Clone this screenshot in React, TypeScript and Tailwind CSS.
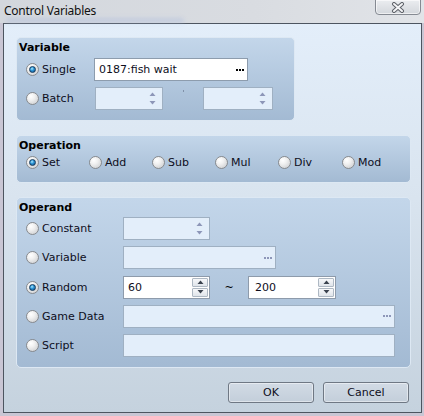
import React from "react";

function Radio({ checked }: { checked?: boolean }) {
  return (
    <span className="flex h-[13px] w-[13px] shrink-0 items-center justify-center rounded-full border border-[#878a8e] bg-[radial-gradient(circle_at_35%_30%,#ffffff_0%,#f1f1f1_35%,#c6c8cb_100%)]">
      {checked && (
        <span className="h-[7px] w-[7px] rounded-full border border-[#133a5e] bg-[radial-gradient(circle_at_40%_35%,#b0eaff_0%,#2f98d8_40%,#0c4680_100%)]" />
      )}
    </span>
  );
}

function Opt({ label, checked, cls }: { label: string; checked?: boolean; cls: string }) {
  return (
    <div className={`flex items-center gap-[3px] ${cls}`}>
      <Radio checked={checked} />
      <span className="text-[11px] leading-[13px] text-[#0e0e1c]">{label}</span>
    </div>
  );
}

function Tri({ up, color }: { up?: boolean; color: string }) {
  return (
    <svg width="7" height="4" viewBox="0 0 7 4">
      {up ? <polygon points="0.5,4 3.5,0.5 6.5,4" fill={color} /> : <polygon points="0.5,0 3.5,3.5 6.5,0" fill={color} />}
    </svg>
  );
}

function DisabledSpin({ cls }: { cls: string }) {
  return (
    <div className={`flex h-[23px] items-center justify-end border border-[#9fb0c2] bg-[#e3eefa] pr-[6px] ${cls}`}>
      <div className="flex flex-col gap-[5px]">
        <Tri up color="#8d96b8" />
        <Tri color="#8d96b8" />
      </div>
    </div>
  );
}

function SpinBtn({ up }: { up?: boolean }) {
  return (
    <div className="flex h-[9px] w-[16px] items-center justify-center rounded-[1px] border border-[#aeb8c3] bg-[linear-gradient(#f7f8fa,#dfe4ea)]">
      <Tri up={up} color="#3a424e" />
    </div>
  );
}

function EnabledSpin({ value, cls, pl }: { value: string; cls: string; pl: string }) {
  return (
    <div className={`flex h-[23px] items-center border border-[#8e9bab] bg-white pr-[1px] ${pl} ${cls}`}>
      <span className="flex-1 text-[11px] leading-[13px] text-[#0e0e1c]">{value}</span>
      <div className="flex flex-col gap-[1px]">
        <SpinBtn up />
        <SpinBtn />
      </div>
    </div>
  );
}

function Dots({ color }: { color: string }) {
  return (
    <div className="flex gap-[1px]">
      <span className={`h-[2px] w-[2px] ${color}`} />
      <span className={`h-[2px] w-[2px] ${color}`} />
      <span className={`h-[2px] w-[2px] ${color}`} />
    </div>
  );
}

function Group({ title, cls, children }: { title: string; cls: string; children: React.ReactNode }) {
  return (
    <div
      className={`flex flex-col rounded-[5px] border border-[#dde8f3] bg-[linear-gradient(#c3d6ea,#a3bad3)] pl-[9px] pt-[3px] ${cls}`}
    >
      <div className="-ml-[7px] h-[13px] text-[11px] font-bold leading-[13px] text-black">{title}</div>
      {children}
    </div>
  );
}

function Button({ label }: { label: string }) {
  return (
    <div className="flex h-[21px] w-[86px] items-center justify-center rounded-[3px] border border-[#6f7884] bg-[linear-gradient(#d2dbe5,#c3ceda)] text-[11px] leading-[13px] text-[#0e0e1c] shadow-[inset_0_0_0_1px_rgba(255,255,255,0.45)]">
      {label}
    </div>
  );
}

export default function App() {
  return (
    <div className="relative flex h-[416px] w-[424px] flex-col overflow-hidden bg-[#c9c6d4] font-['DejaVu_Sans',sans-serif]">
      {/* title bar */}
      <div className="relative flex h-[23px] shrink-0 items-start bg-[linear-gradient(90deg,#d3d7dd,#d9dce1_60%,#e1e4e8)]">
        <div className="absolute left-[6px] top-[18px] h-[5px] w-[178px] rounded-full bg-[#a8b8dc] opacity-40 blur-[2px]" />
        <span className="relative ml-[4px] mt-[3px] font-['Noto_Sans',sans-serif] text-[12px] leading-[16px] tracking-[-0.25px] text-[#111]">
          Control Variables
        </span>
        <div className="absolute right-[3px] top-[-1px] flex h-[16px] w-[46px] items-center justify-center rounded-b-[4px] border border-[#858a92] bg-[linear-gradient(#ebedf0,#d3d7dc)] shadow-[inset_0_0_0_1px_rgba(255,255,255,0.6)]">
          <svg width="14" height="11" viewBox="0 0 14 11">
            <path d="M3 2 L11 9 M11 2 L3 9" stroke="#5d6168" strokeWidth="4" strokeLinecap="round" />
            <path d="M3 2 L11 9 M11 2 L3 9" stroke="#f4f5f7" strokeWidth="2" strokeLinecap="round" />
          </svg>
        </div>
      </div>

      {/* client area */}
      <div className="ml-[3px] flex h-[390px] w-[419px] flex-col border border-[#4d5560] bg-[linear-gradient(#e3eefa,#d9e4ef_45%,#c5d2de)] pl-[12px] pt-[13px]">
        {/* Variable */}
        <Group title="Variable" cls="h-[84px] w-[279px]">
          <div className="mt-[4px] flex flex-col gap-[6px]">
            <div className="flex items-center">
              <Opt label="Single" checked cls="w-[68px]" />
              <div className="flex h-[23px] w-[154px] items-center justify-between border border-[#8d9cad] bg-white pl-[4px] pr-[3px]">
                <span className="text-[11px] leading-[13px] text-[#0e0e1c]">0187:fish wait</span>
                <Dots color="bg-black" />
              </div>
            </div>
            <div className="flex items-center">
              <Opt label="Batch" cls="w-[69px]" />
              <DisabledSpin cls="w-[68px]" />
              <div className="flex w-[40px] justify-center">
                <span className="-mt-[9px] h-[2px] w-[1px] bg-[#8090a8]" />
              </div>
              <DisabledSpin cls="w-[70px]" />
            </div>
          </div>
        </Group>

        {/* Operation */}
        <Group title="Operation" cls="mt-[14px] h-[48px] w-[395px]">
          <div className="mt-[4px] flex items-center">
            <Opt label="Set" checked cls="w-[63px]" />
            <Opt label="Add" cls="w-[63px]" />
            <Opt label="Sub" cls="w-[63px]" />
            <Opt label="Mul" cls="w-[63px]" />
            <Opt label="Div" cls="w-[64px]" />
            <Opt label="Mod" cls="w-[63px]" />
          </div>
        </Group>

        {/* Operand */}
        <Group title="Operand" cls="mt-[14px] h-[171px] w-[395px]">
          <div className="mt-[3px] flex flex-col gap-[6.3px]">
            <div className="flex items-center">
              <Opt label="Constant" cls="w-[97px]" />
              <DisabledSpin cls="w-[87px]" />
            </div>
            <div className="flex items-center">
              <Opt label="Variable" cls="w-[97px]" />
              <div className="flex h-[23px] w-[153px] items-center justify-end border border-[#9fb0c2] bg-[#e3eefa] pr-[3px]">
                <Dots color="bg-[#8d96b8]" />
              </div>
            </div>
            <div className="flex items-center">
              <Opt label="Random" checked cls="w-[97px]" />
              <EnabledSpin value="60" cls="w-[87px]" pl="pl-[4px]" />
              <div className="flex w-[38px] justify-center">
                <span className="text-[11px] leading-[13px] text-black">~</span>
              </div>
              <EnabledSpin value="200" cls="w-[88px]" pl="pl-[6px]" />
            </div>
            <div className="flex items-center">
              <Opt label="Game Data" cls="w-[97px]" />
              <div className="flex h-[23px] w-[272px] items-center justify-end border border-[#9fb0c2] bg-[#e3eefa] pr-[3px]">
                <Dots color="bg-[#8d96b8]" />
              </div>
            </div>
            <div className="flex items-center">
              <Opt label="Script" cls="w-[97px]" />
              <div className="h-[23px] w-[272px] border border-[#9fb0c2] bg-[#e3eefa]" />
            </div>
          </div>
        </Group>

        {/* Buttons */}
        <div className="mt-[14px] flex w-[393px] justify-end gap-[9px]">
          <Button label="OK" />
          <Button label="Cancel" />
        </div>
      </div>
    </div>
  );
}
